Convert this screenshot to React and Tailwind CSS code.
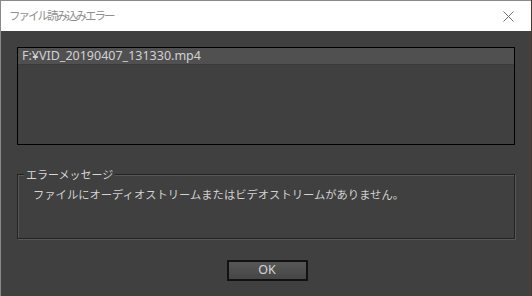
export default function App() {
  const jp = { fontFamily: '"Noto Sans CJK JP", "Noto Sans", sans-serif' };
  const latin = { fontFamily: '"Noto Sans", "Noto Sans CJK JP", sans-serif' };

  return (
    <div className="flex w-[532px] h-[296px] bg-[#4b3428] overflow-hidden">
      <div className="w-[531px] flex flex-col border-l border-t border-[#8a8a8a]">
        {/* title bar */}
        <div className="h-[30px] bg-white flex items-center justify-between pl-[8px] pr-[17px]">
          <span className="text-[11.5px] tracking-[-2px] text-[#8f8f8f] leading-none" style={jp}>
            ファイル読み込みエラー
          </span>
          <svg width="11" height="11" viewBox="0 0 11 11" className="mt-[1px]">
            <path d="M0.5 0.5 L10.5 10.5 M10.5 0.5 L0.5 10.5" stroke="#6f6f6f" strokeWidth="1" fill="none" />
          </svg>
        </div>

        {/* body */}
        <div className="flex-1 bg-[#404040] px-[16px] pt-[16px] flex flex-col">
          {/* file list */}
          <div className="h-[98px] border border-black bg-[#404040]">
            <div className="h-[17px] bg-[#505050] border-b border-[#3a3a3a] flex items-center pl-[4px]">
              <span className="text-[12.5px] leading-none text-[#d2d2d2]" style={latin}>
                F:¥VID_20190407_131330.mp4
              </span>
            </div>
          </div>

          {/* error message group */}
          <div className="relative mt-[29px] h-[65px] border border-[#232323] shadow-[1px_1px_0_#575757,inset_1px_1px_0_#575757]">
            <span
              className="absolute -top-[8px] left-[6px] px-[2px] bg-[#404040] text-[11px] leading-[14px] text-[#d6d6d6]"
              style={jp}
            >
              エラーメッセージ
            </span>
            <p className="pl-[15px] pt-[12px] text-[11.3px] leading-[14px] text-[#d2d2d2]" style={jp}>
              ファイルにオーディオストリームまたはビデオストリームがありません。
            </p>
          </div>

          {/* button */}
          <div className="flex justify-center mt-[21px] pl-[2px]">
            <button className="w-[81px] h-[21px] border-2 border-[#121212] bg-gradient-to-b from-[#575757] to-[#464646] text-[12.5px] leading-none text-[#d6d6d6]" style={latin}>
              OK
            </button>
          </div>
        </div>
      </div>
    </div>
  );
}
